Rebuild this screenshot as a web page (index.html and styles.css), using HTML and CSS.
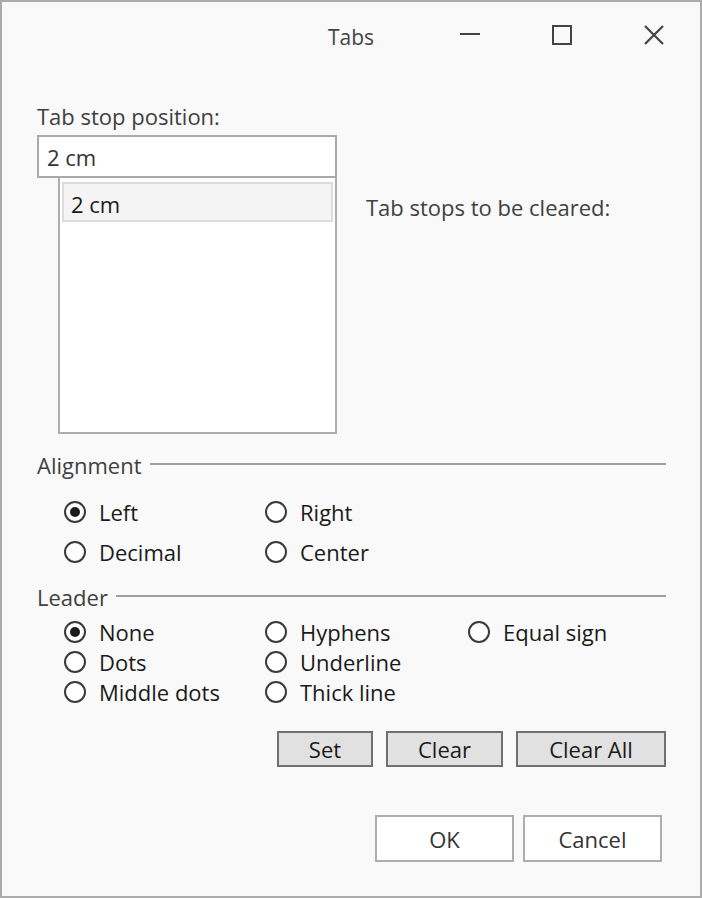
FILE: index.html
```html
<html>
  <head>
    <title>Tabs</title>
    <link rel="stylesheet" href="styles.css">
  </head>
  <body>
  <div class="window">
    <div class="titlebar">
      <div></div>
      <div class="title">Tabs</div>
      <div class="controls">
        <span class="ctl">
          <svg width="20" height="20" viewBox="0 0 20 20"><rect x="0" y="8" width="20" height="2" fill="#444"/></svg>
        </span>
        <span class="ctl">
          <svg width="20" height="20" viewBox="0 0 20 20"><rect x="1" y="1" width="18" height="18" fill="none" stroke="#444" stroke-width="2"/></svg>
        </span>
        <span class="ctl">
          <svg width="20" height="20" viewBox="0 0 20 20"><path d="M1 1 L19 19 M19 1 L1 19" stroke="#444" stroke-width="2.2" fill="none"/></svg>
        </span>
      </div>
    </div>

    <div class="content">
      <div class="toprow">
        <div class="stops">
          <div class="label">Tab stop position:</div>
          <div class="input">2 cm</div>
          <div class="list">
            <div class="item">2 cm</div>
          </div>
        </div>
        <div class="cleared">Tab stops to be cleared:</div>
      </div>

      <div class="group">
        <span>Alignment</span>
        <span class="rule"></span>
      </div>
      <div class="options align">
        <div class="opt"><span class="radio on"></span>Left</div>
        <div class="opt"><span class="radio"></span>Right</div>
        <div class="opt"></div>
        <div class="opt"><span class="radio"></span>Decimal</div>
        <div class="opt"><span class="radio"></span>Center</div>
        <div class="opt"></div>
      </div>

      <div class="group leadergroup">
        <span>Leader</span>
        <span class="rule"></span>
      </div>
      <div class="options leader">
        <div class="opt"><span class="radio on"></span>None</div>
        <div class="opt"><span class="radio"></span>Hyphens</div>
        <div class="opt"><span class="radio"></span>Equal sign</div>
        <div class="opt"><span class="radio"></span>Dots</div>
        <div class="opt"><span class="radio"></span>Underline</div>
        <div class="opt"></div>
        <div class="opt"><span class="radio"></span>Middle dots</div>
        <div class="opt"><span class="radio"></span>Thick line</div>
        <div class="opt"></div>
      </div>

      <div class="actions">
        <button class="btn setbtn">Set</button>
        <button class="btn clearbtn">Clear</button>
        <button class="btn clearallbtn">Clear All</button>
      </div>

      <div class="footer">
        <button class="dlg">OK</button>
        <button class="dlg">Cancel</button>
      </div>
    </div>
  </div>
  </body>
</html>
```

FILE: styles.css
```css
body {
  margin: 0;
  font-family: "Open Sans", "Noto Sans", sans-serif;
  font-size: 22px;
  color: #3a3a3a;
}
.window {
  width: 702px;
  height: 898px;
  box-sizing: border-box;
  border: 2px solid #ababab;
  background: #f9f9f9;
}
.titlebar {
  height: 66px;
  display: grid;
  grid-template-columns: 1fr auto 1fr;
  align-items: center;
}
.title {
  font-size: 21px;
  color: #444;
  padding-top: 3px;
}
.controls {
  display: flex;
  justify-content: flex-end;
}
.ctl {
  width: 92px;
  height: 40px;
  display: flex;
  align-items: center;
  justify-content: center;
}
.content {
  padding: 34px 34px 0 35px;
}
.toprow {
  display: flex;
}
.stops {
  width: 300px;
}
.label {
  height: 28px;
  line-height: 28px;
  color: #404040;
}
.input {
  margin-top: 5px;
  height: 43px;
  box-sizing: border-box;
  border: 2px solid #a9a9a9;
  background: #fff;
  padding-left: 8px;
  line-height: 40px;
  color: #333;
}
.list {
  margin-left: 21px;
  height: 256px;
  box-sizing: border-box;
  border: 2px solid #adadad;
  border-top: none;
  background: #fff;
  padding: 4px 2px 0 2px;
}
.item {
  height: 40px;
  box-sizing: border-box;
  border: 2px solid #dcdcdc;
  background: #f4f4f4;
  padding-left: 7px;
  line-height: 40px;
  color: #1a1a1a;
}
.cleared {
  margin-left: 29px;
  padding-top: 91px;
  line-height: 28px;
  color: #404040;
}
.group {
  margin-top: 17px;
  height: 28px;
  line-height: 28px;
  display: flex;
  align-items: center;
  color: #404040;
}
.rule {
  flex: 1;
  height: 2px;
  background: #a0a0a0;
  margin-left: 8px;
  margin-top: -3px;
}
.options {
  display: grid;
  grid-template-columns: 201px 203px auto;
  padding-left: 27px;
  color: #1a1a1a;
}
.align {
  margin-top: 13px;
  grid-auto-rows: 40px;
}
.leadergroup {
  margin-top: 11px;
}
.leader {
  margin-top: 6px;
  grid-auto-rows: 30px;
}
.opt {
  display: flex;
  align-items: center;
}
.radio {
  width: 22px;
  height: 22px;
  box-sizing: border-box;
  border: 2px solid #3a3a3a;
  border-radius: 50%;
  background: #fff;
  margin-right: 13px;
  display: flex;
  align-items: center;
  justify-content: center;
}
.radio.on::after {
  content: "";
  width: 10px;
  height: 10px;
  border-radius: 50%;
  background: #1a1a1a;
}
.actions {
  margin-top: 24px;
  display: flex;
  justify-content: flex-end;
  gap: 13px;
}
.btn {
  height: 36px;
  box-sizing: border-box;
  border: 2px solid #707070;
  background: #e1e1e1;
  font-family: inherit;
  font-size: 22px;
  color: #1a1a1a;
  padding: 0;
  line-height: 30px;
}
.setbtn { width: 96px; }
.clearbtn { width: 117px; }
.clearallbtn { width: 150px; }
.footer {
  margin-top: 48px;
  margin-right: 4px;
  display: flex;
  justify-content: flex-end;
  gap: 9px;
}
.dlg {
  width: 139px;
  height: 47px;
  box-sizing: border-box;
  border: 2px solid #adadad;
  background: #fff;
  font-family: inherit;
  font-size: 22px;
  color: #333;
  padding: 0;
}
```
